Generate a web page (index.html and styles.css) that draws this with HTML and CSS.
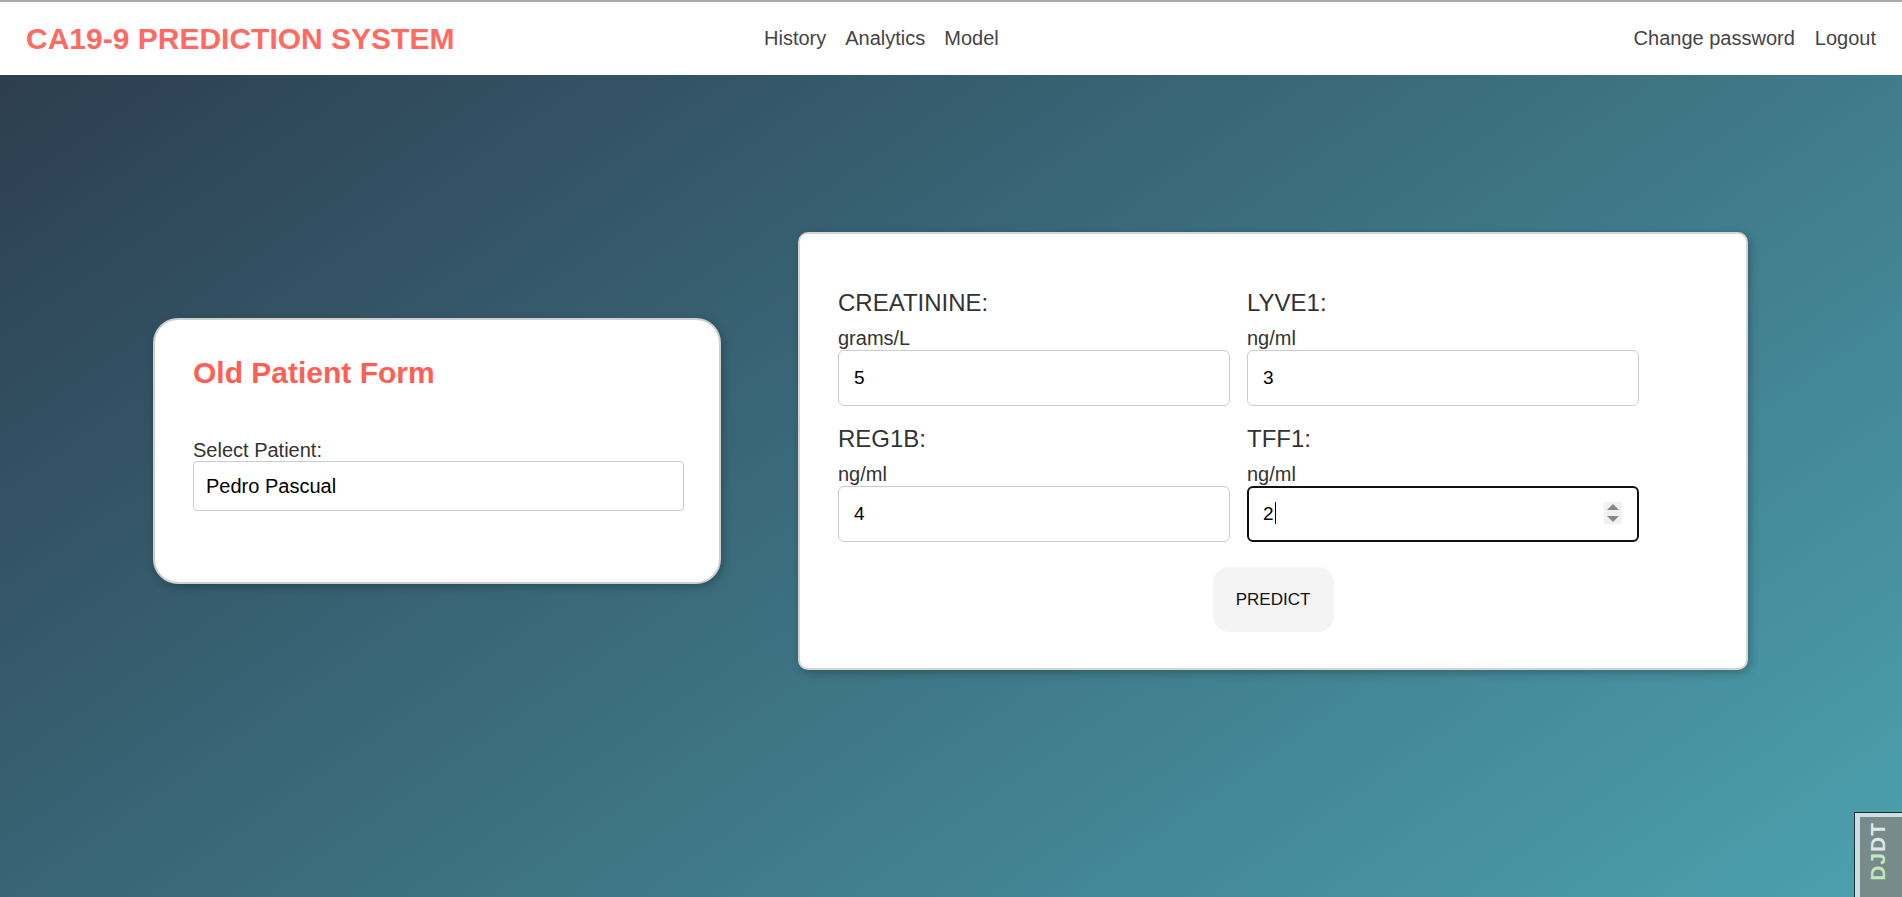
FILE: index.html
```html
<!DOCTYPE html>
<html lang="en">
<head>
<meta charset="utf-8">
<title>CA19-9 Prediction System</title>
<link rel="stylesheet" href="styles.css">
</head>
<body>
<header class="topbar">
  <div class="brand">CA19-9 PREDICTION SYSTEM</div>
  <nav class="menu">
    <a href="#">History</a>
    <a href="#">Analytics</a>
    <a href="#">Model</a>
  </nav>
  <nav class="account">
    <a href="#">Change password</a>
    <a href="#">Logout</a>
  </nav>
</header>
<main class="stage">
  <section class="card patient-card">
    <h2 class="patient-title">Old Patient Form</h2>
    <label class="patient-label" for="patient">Select Patient:</label>
    <input class="patient-input" id="patient" type="text" value="Pedro Pascual">
  </section>
  <section class="card predict-card">
    <div class="marker-grid">
      <div class="field">
        <div class="marker">CREATININE:</div>
        <div class="unit">grams/L</div>
        <input class="marker-input" type="text" value="5">
      </div>
      <div class="field">
        <div class="marker">LYVE1:</div>
        <div class="unit">ng/ml</div>
        <input class="marker-input" type="text" value="3">
      </div>
      <div class="field">
        <div class="marker">REG1B:</div>
        <div class="unit">ng/ml</div>
        <input class="marker-input" type="text" value="4">
      </div>
      <div class="field">
        <div class="marker">TFF1:</div>
        <div class="unit">ng/ml</div>
        <div class="input-wrap">
          <input class="marker-input is-focused" type="text" value="2">
          <span class="caret"></span>
          <span class="spinner">
            <svg width="18" height="22" viewBox="0 0 18 22"><path d="M3 8 L15 8 L9 2 Z" fill="#888"/><path d="M3 14 L15 14 L9 20 Z" fill="#888"/></svg>
          </span>
        </div>
      </div>
    </div>
    <div class="actions">
      <button class="predict-btn" type="button">PREDICT</button>
    </div>
  </section>
</main>
<div class="djdt">
  <div class="djdt-inner"><span class="djdt-text"><span class="djdt-d">D</span><span class="djdt-j">J</span>DT</span></div>
</div>
</body>
</html>
```
FILE: styles.css
```css
html, body {
  margin: 0;
  padding: 0;
}
body {
  font-family: "Liberation Sans", Arial, sans-serif;
  width: 1902px;
  height: 897px;
  overflow: hidden;
  background: #4ca1af;
}
.topbar {
  display: flex;
  align-items: center;
  height: 73px;
  border-top: 2px solid #ababab;
  background: #fff;
  padding: 0 26px 0 26px;
}
.brand {
  flex: 0 0 738px;
  font-size: 30px;
  font-weight: bold;
  color: #ff6b63;
  line-height: 34px;
}
.menu, .account {
  display: flex;
  gap: 19px;
}
.account {
  margin-left: auto;
  gap: 20px;
}
.menu a, .account a {
  font-size: 20px;
  line-height: 23px;
  color: #444;
  text-decoration: none;
}
.stage {
  box-sizing: border-box;
  height: 822px;
  display: flex;
  align-items: center;
  gap: 77px;
  padding: 0 0 70px 153px;
  background: linear-gradient(145deg, #2c3e50 0%, #4ca1af 100%);
}
.card {
  box-sizing: border-box;
  background: #fff;
  box-shadow: 2px 3px 8px rgba(0, 0, 0, 0.25);
}
.patient-card {
  width: 568px;
  border: 2px solid #cfcfcf;
  border-radius: 25px;
  padding: 36px 35px 71px 38px;
}
.patient-title {
  margin: 0;
  font-size: 30px;
  font-weight: bold;
  line-height: 34px;
  color: #fd5f55;
}
.patient-label {
  display: block;
  margin-top: 49px;
  font-size: 20px;
  line-height: 22px;
  color: #333;
}
.patient-input {
  display: block;
  box-sizing: border-box;
  width: 100%;
  height: 50px;
  margin: 0;
  border: 1px solid #ccc;
  border-radius: 4px;
  padding: 0 12px;
  font-family: "Liberation Sans", Arial, sans-serif;
  font-size: 20px;
  color: #000;
  background: #fff;
  outline: none;
}
.predict-card {
  width: 950px;
  border: 2px solid #d4d4d4;
  border-radius: 10px;
  padding: 55px 38px 36px 38px;
}
.marker-grid {
  display: grid;
  grid-template-columns: 392px 392px;
  column-gap: 17px;
  row-gap: 19px;
}
.marker {
  font-size: 24px;
  line-height: 27px;
  color: #333;
}
.unit {
  margin-top: 11px;
  font-size: 20px;
  line-height: 23px;
  color: #333;
}
.marker-input {
  display: block;
  box-sizing: border-box;
  width: 100%;
  height: 56px;
  margin: 0;
  border: 1px solid #ccc;
  border-radius: 6px;
  padding: 0 15px;
  font-family: "Liberation Sans", Arial, sans-serif;
  font-size: 19px;
  color: #000;
  background: #fff;
  outline: none;
}
.input-wrap {
  position: relative;
}
.marker-input.is-focused {
  border: 2px solid #111;
  padding: 0 14px;
}
.caret {
  position: absolute;
  left: 28px;
  top: 16px;
  width: 1px;
  height: 22px;
  background: #000;
}
.spinner {
  position: absolute;
  right: 17px;
  top: 16px;
  width: 18px;
  height: 22px;
  background: #f1f1f1;
  display: flex;
}
.actions {
  display: flex;
  justify-content: center;
  margin-top: 25px;
}
.predict-btn {
  width: 121px;
  height: 65px;
  border: none;
  border-radius: 16px;
  background: #f4f4f4;
  font-family: "Liberation Sans", Arial, sans-serif;
  font-size: 17px;
  color: #111;
  padding: 0;
}
.djdt {
  position: fixed;
  right: 0;
  bottom: 0;
  box-sizing: border-box;
  width: 48px;
  height: 85px;
  border: 1px solid #1e2d30;
  border-right: 0;
  border-bottom: 0;
  background: #cddfe2;
  padding: 4px 0 0 5px;
}
.djdt-inner {
  height: 100%;
  background: #798a8a;
  padding: 5px 0 0 7px;
  box-sizing: border-box;
}
.djdt-text {
  display: inline-block;
  writing-mode: vertical-rl;
  transform: rotate(180deg);
  font-family: "Liberation Sans", Arial, sans-serif;
  font-weight: bold;
  font-size: 21px;
  line-height: 22px;
  letter-spacing: 1px;
  color: #dbe9eb;
}
.djdt-d {
  color: #c2e9ba;
}
.djdt-j {
  color: #c2e9ba;
}
```
